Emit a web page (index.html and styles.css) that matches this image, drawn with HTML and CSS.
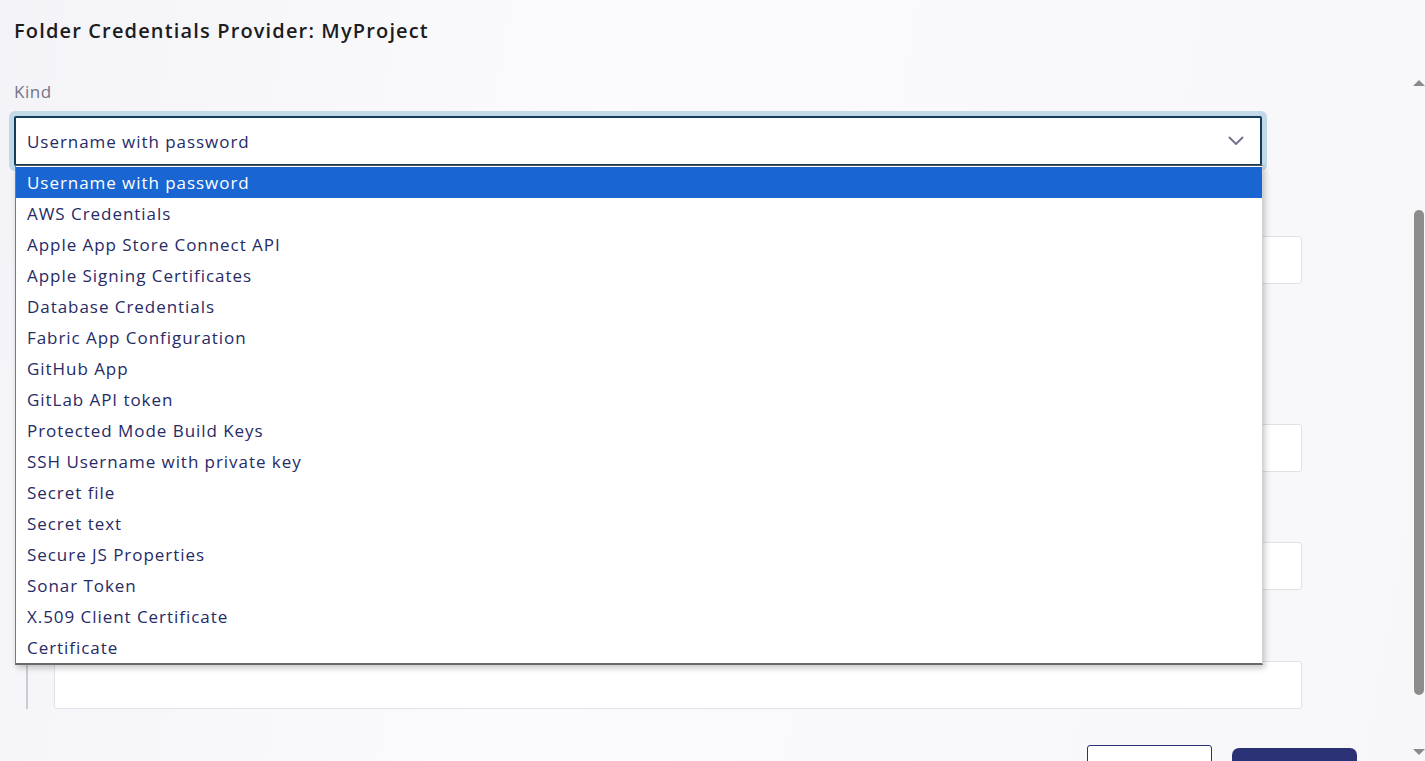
FILE: index.html
```html
<!DOCTYPE html>
<html lang="en">
<head>
<meta charset="utf-8">
<title>Folder Credentials Provider: MyProject</title>
<link rel="stylesheet" href="styles.css">
</head>
<body>
<div class="page">
  <h1 class="title">Folder Credentials Provider: MyProject</h1>
  <div class="form">
    <div class="field">
      <label class="label">Kind</label>
      <div class="select-wrap">
        <div class="select">
          <span class="select-value">Username with password</span>
          <svg class="chevron" width="16" height="10" viewBox="0 0 16 10"><path d="M1.5 1.5 L8 8 L14.5 1.5" fill="none" stroke="#6f6f8c" stroke-width="1.8" stroke-linecap="round" stroke-linejoin="round"/></svg>
        </div>
        <ul class="dropdown">
          <li class="opt active">Username with password</li>
          <li class="opt">AWS Credentials</li>
          <li class="opt">Apple App Store Connect API</li>
          <li class="opt">Apple Signing Certificates</li>
          <li class="opt">Database Credentials</li>
          <li class="opt">Fabric App Configuration</li>
          <li class="opt">GitHub App</li>
          <li class="opt">GitLab API token</li>
          <li class="opt">Protected Mode Build Keys</li>
          <li class="opt">SSH Username with private key</li>
          <li class="opt">Secret file</li>
          <li class="opt">Secret text</li>
          <li class="opt">Secure JS Properties</li>
          <li class="opt">Sonar Token</li>
          <li class="opt">X.509 Client Certificate</li>
          <li class="opt">Certificate</li>
        </ul>
      </div>
    </div>
    <div class="nested">
      <div class="input in1"></div>
      <div class="input in2"></div>
      <div class="input in3"></div>
      <div class="input in4"></div>
    </div>
    <div class="actions">
      <button class="btn btn-outline"></button>
      <button class="btn btn-primary"></button>
    </div>
  </div>
</div>
<div class="scrollbar">
  <div class="arrow up"></div>
  <div class="track"><div class="thumb"></div></div>
  <div class="arrow down"></div>
</div>
</body>
</html>
```
FILE: styles.css
```css
* { box-sizing: border-box; }
html, body { margin: 0; padding: 0; height: 100%; overflow: hidden; }
body {
  background: linear-gradient(100deg, #f4f4f8 0%, #fbfbfd 40%, #f7f7fa 100%);
  font-family: "Open Sans", "Liberation Sans", sans-serif;
  color: #262b66;
  position: relative;
}
.page { padding: 17px 0 0 14px; width: 1400px; }
.title {
  margin: 0;
  font-size: 20px;
  font-weight: 600;
  color: #1c1c1f;
  line-height: 28px;
  letter-spacing: 1.15px;
}
.form { margin-top: 37px; }
.field { display: flex; flex-direction: column; }
.label {
  font-size: 17px;
  color: #737386;
  line-height: 20px;
  margin-bottom: 14px;
  letter-spacing: 0.5px;
}
.select-wrap { position: relative; width: 1248px; }
.select {
  height: 50px;
  border: 2px solid #143c5c;
  border-radius: 2px;
  background: #fff;
  box-shadow: 0 0 0 5px #c2d9e8;
  display: flex;
  align-items: center;
  justify-content: space-between;
  padding: 0 16px 0 11px;
}
.select-value { font-size: 17px; letter-spacing: 0.95px; color: #262b66; }
.chevron { display: block; }
.dropdown {
  position: absolute;
  left: 1px;
  top: 49px;
  width: 1248px;
  margin: 0;
  padding: 1px 0 0;
  list-style: none;
  background: #fff;
  border-left: 1px solid #7a7a7a;
  border-right: 1px solid #d0d0d0;
  border-bottom: 2px solid #6a6a6a;
  border-top: 1px solid #555;
  box-shadow: 2px 3px 6px rgba(0,0,0,0.22);
  z-index: 5;
}
.opt {
  height: 31px;
  line-height: 31px;
  padding-left: 11px;
  font-size: 17px;
  letter-spacing: 0.95px;
  color: #262b66;
  white-space: nowrap;
}
.opt.active { background: #1966d2; color: #fff; }
.nested {
  margin-top: 0;
  margin-left: 12px;
  border-left: 2px solid #c6cdd4;
  padding: 70px 0 0 26px;
  display: flex;
  flex-direction: column;
}
.input {
  width: 1248px;
  height: 48px;
  background: #fff;
  border: 1px solid #e1e1e6;
  border-radius: 3px;
}
.in2 { margin-top: 140px; }
.in3 { margin-top: 70px; }
.in4 { margin-top: 71px; }
.actions {
  display: flex;
  justify-content: flex-end;
  align-items: flex-start;
  gap: 20px;
  width: 1343px;
  margin-top: 36px;
}
.btn { width: 125px; height: 40px; border-radius: 4px; padding: 0; }
.btn-outline { background: #fff; border: 1px solid #2a3174; border-radius: 3px; }
.btn-primary { background: #2a3174; border: none; border-radius: 7px; margin-top: 3px; }
.scrollbar {
  position: absolute;
  right: 0;
  top: 72px;
  bottom: 0;
  width: 13px;
  display: flex;
  flex-direction: column;
  align-items: center;
}
.arrow { width: 0; height: 0; border-left: 6px solid transparent; border-right: 6px solid transparent; }
.arrow.up { border-bottom: 6px solid #8a8a8a; margin-top: 8px; }
.arrow.down { border-top: 6px solid #8a8a8a; margin-bottom: 6px; }
.track { flex: 1; width: 100%; padding-top: 124px; padding-bottom: 46px; display: flex; justify-content: center; }
.thumb { width: 10px; height: 485px; background: #8c8c8c; border-radius: 5px; }
```
